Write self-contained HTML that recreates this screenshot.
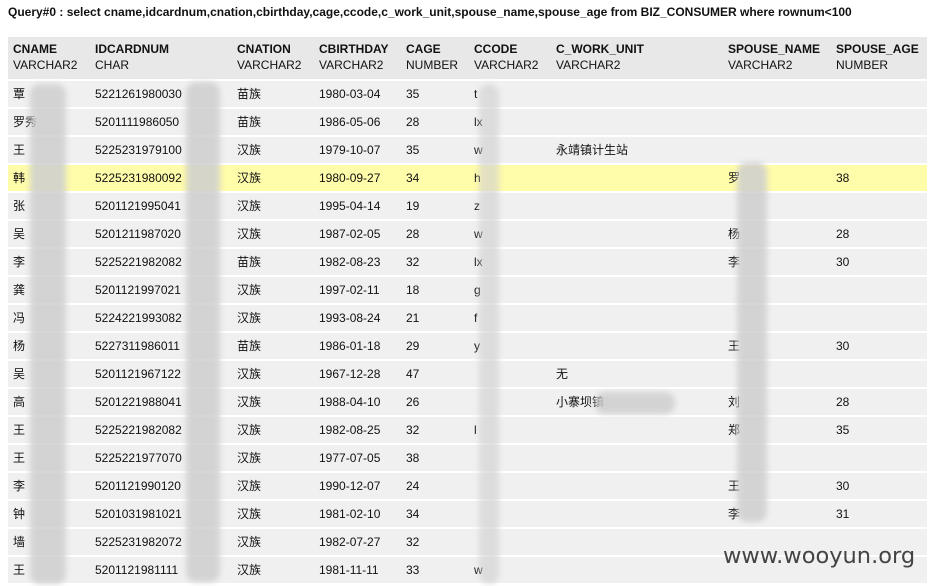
<!DOCTYPE html><html><head><meta charset="utf-8"><style>
body{margin:0;width:929px;height:586px;background:#fff;overflow:hidden;position:relative;font-family:"Liberation Sans","Noto Sans CJK SC",sans-serif;font-size:12px;color:#111}
.q{position:absolute;left:8px;top:5px;font-weight:bold;font-size:12px;color:#111}
.hd{position:absolute;left:8px;top:37px;width:919px;height:42px;background:#e8e8e8}
.r{position:absolute;left:8px;width:919px;height:26px;background:#f0f0f0}
.c{position:absolute;white-space:nowrap}
.v{position:absolute;white-space:nowrap;height:26px;line-height:26px}
.blur{position:absolute;filter:blur(3px);background:#cfcfcf;opacity:.85;border-radius:10px}
.wm{position:absolute;left:723px;top:543px;font-size:22.5px;color:#444;font-family:"DejaVu Sans","Liberation Sans",sans-serif}
</style></head><body>
<div class="q">Query#0 : select cname,idcardnum,cnation,cbirthday,cage,ccode,c_work_unit,spouse_name,spouse_age from BIZ_CONSUMER where rownum&lt;100</div>
<div class="hd"></div>
<div id="t"></div>
<script>
var cols=[13,95,237,319,406,474,556,728,836];
var h=[["CNAME","VARCHAR2"],["IDCARDNUM","CHAR"],["CNATION","VARCHAR2"],["CBIRTHDAY","VARCHAR2"],["CAGE","NUMBER"],["CCODE","VARCHAR2"],["C_WORK_UNIT","VARCHAR2"],["SPOUSE_NAME","VARCHAR2"],["SPOUSE_AGE","NUMBER"]];
var s="";
h.forEach(function(x,i){s+='<div class="c" style="left:'+cols[i]+'px;top:42px;font-weight:bold">'+x[0]+'</div><div class="c" style="left:'+cols[i]+'px;top:58px">'+x[1]+'</div>';});
var d=[["覃","5221261980030","苗族","1980-03-04","35","t","","",""],
["罗秀","5201111986050","苗族","1986-05-06","28","lx","","",""],
["王","5225231979100","汉族","1979-10-07","35","w","永靖镇计生站","",""],
["韩","5225231980092","汉族","1980-09-27","34","h","","罗","38"],
["张","5201121995041","汉族","1995-04-14","19","z","","",""],
["吴","5201211987020","汉族","1987-02-05","28","w","","杨","28"],
["李","5225221982082","苗族","1982-08-23","32","lx","","李","30"],
["龚","5201121997021","汉族","1997-02-11","18","g","","",""],
["冯","5224221993082","汉族","1993-08-24","21","f","","",""],
["杨","5227311986011","苗族","1986-01-18","29","y","","王","30"],
["吴","5201121967122","汉族","1967-12-28","47","","无","",""],
["高","5201221988041","汉族","1988-04-10","26","","小寨坝镇","刘","28"],
["王","5225221982082","汉族","1982-08-25","32","l","","郑","35"],
["王","5225221977070","汉族","1977-07-05","38","","","",""],
["李","5201121990120","汉族","1990-12-07","24","","","王","30"],
["钟","5201031981021","汉族","1981-02-10","34","","","李","31"],
["墙","5225231982072","汉族","1982-07-27","32","","","",""],
["王","5201121981111","汉族","1981-11-11","33","w","","",""]];
d.forEach(function(r,k){var y=81+k*28;s+='<div class="r" style="top:'+y+'px;'+(k==3?'background:#fffcaa':'')+'"></div>';
r.forEach(function(v,i){s+='<div class="v" style="left:'+cols[i]+'px;top:'+y+'px">'+v+'</div>';});});
s+='<div class="blur" style="left:30px;top:84px;width:36px;height:500px"></div>';
s+='<div class="blur" style="left:186px;top:82px;width:34px;height:500px"></div>';
s+='<div class="blur" style="left:479px;top:84px;width:20px;height:500px;opacity:.6"></div>';
s+='<div class="blur" style="left:737px;top:162px;width:30px;height:360px"></div>';
s+='<div class="blur" style="left:595px;top:392px;width:80px;height:22px"></div>';
document.getElementById("t").innerHTML=s;
</script>
<div class="wm">www.wooyun.org</div>
</body></html>
